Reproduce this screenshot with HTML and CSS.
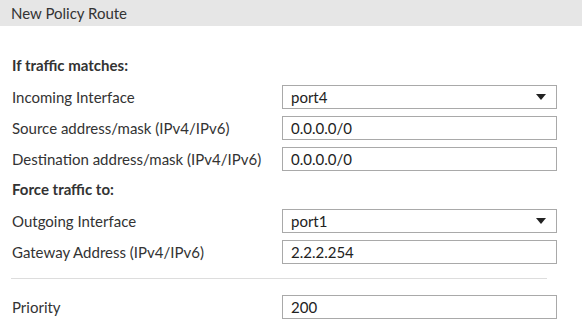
FILE: index.html
```html
<!DOCTYPE html>
<html lang="en">
<head>
  <meta charset="UTF-8" />
  <title>New Policy Route</title>
  <link rel="stylesheet" href="styles.css">
</head>
<body>
  <div class="panel-header">New Policy Route</div>

  <div class="form">
    <div class="section-title">If traffic matches:</div>

    <div class="row">
      <label>Incoming Interface</label>
      <div class="field select">
        <span>port4</span>
        <svg class="caret" width="10" height="6" viewBox="0 0 10 6"><path d="M0 0H10L5 6Z" fill="#222"/></svg>
      </div>
    </div>

    <div class="row">
      <label>Source address/mask (IPv4/IPv6)</label>
      <div class="field"><span>0.0.0.0/0</span></div>
    </div>

    <div class="row">
      <label>Destination address/mask (IPv4/IPv6)</label>
      <div class="field"><span>0.0.0.0/0</span></div>
    </div>

    <div class="section-title">Force traffic to:</div>

    <div class="row">
      <label>Outgoing Interface</label>
      <div class="field select">
        <span>port1</span>
        <svg class="caret" width="10" height="6" viewBox="0 0 10 6"><path d="M0 0H10L5 6Z" fill="#222"/></svg>
      </div>
    </div>

    <div class="row">
      <label>Gateway Address (IPv4/IPv6)</label>
      <div class="field"><span>2.2.2.254</span></div>
    </div>

    <hr class="divider">

    <div class="row">
      <label>Priority</label>
      <div class="field"><span>200</span></div>
    </div>
  </div>
</body>
</html>
```

FILE: styles.css
```css
body {
  margin: 0;
  background-color: #fff;
  color: #333;
  font-family: 'Lato', 'Liberation Sans', sans-serif;
  font-size: 15px;
}

.panel-header {
  height: 26px;
  line-height: 26px;
  padding-left: 11px;
  background-color: #e6e6e6;
  color: #333;
  font-size: 15px;
}

.form {
  padding: 24px 0 0 12px;
}

.section-title {
  height: 31px;
  line-height: 31px;
  font-weight: bold;
}

.row {
  display: grid;
  grid-template-columns: 270px 275px;
  align-items: center;
  height: 31px;
}

.row label {
  display: block;
}

.field {
  display: flex;
  align-items: center;
  justify-content: space-between;
  box-sizing: border-box;
  height: 24px;
  padding: 0 8px 0 8px;
  border: 1px solid #a9a9a9;
  color: #222;
}

.caret {
  margin-right: 2px;
}

.divider {
  width: 536px;
  margin: 11px 0 12px -1px;
  border: none;
  border-top: 1px solid #ddd;
}
```
